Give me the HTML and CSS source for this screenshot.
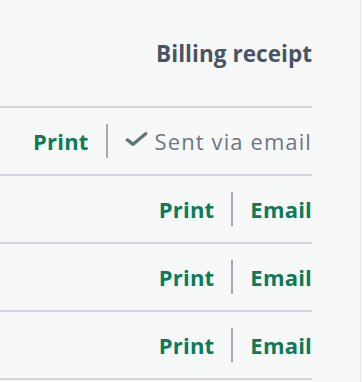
FILE: index.html
```html
<!DOCTYPE html>
<html>
<head>
<meta charset="utf-8">
<link rel="stylesheet" href="styles.css">
</head>
<body>
<div class="page">
  <div class="table">
    <div class="head">Billing receipt</div>
    <div class="row">
      <a class="link">Print</a><span class="sep"></span>
      <span class="sent"><svg class="check" viewBox="0 0 24 16" width="23" height="16"><path d="M2.5 9 L8.5 13.5 L21.5 2.5" fill="none" stroke="#5f7676" stroke-width="3.6" stroke-linecap="round" stroke-linejoin="round"/></svg>Sent via email</span>
    </div>
    <div class="row"><a class="link">Print</a><span class="sep"></span><a class="link">Email</a></div>
    <div class="row"><a class="link">Print</a><span class="sep"></span><a class="link">Email</a></div>
    <div class="row"><a class="link">Print</a><span class="sep"></span><a class="link">Email</a></div>
  </div>
</div>
</body>
</html>
```
FILE: styles.css
```css
html, body {
  margin: 0;
  padding: 0;
  background: #f7f9f9;
}
body {
  font-family: "Open Sans", "Noto Sans", sans-serif;
}
.page {
  width: 361px;
  height: 382px;
  border-right: 1px solid #e8ebec;
  box-sizing: border-box;
  padding-right: 48px;
  overflow: hidden;
}
.table {
  display: flex;
  flex-direction: column;
}
.head {
  height: 106px;
  border-bottom: 2px solid #d3d6db;
  display: flex;
  align-items: center;
  justify-content: flex-end;
  font-size: 22.5px;
  font-weight: 700;
  color: #4a5466;
  letter-spacing: 0.05px;
}
.row {
  height: 66px;
  border-bottom: 2px solid #d3d6db;
  display: flex;
  align-items: center;
  justify-content: flex-end;
  font-size: 22px;
}
.link {
  color: #0e7a56;
  font-weight: 700;
  letter-spacing: 0.2px;
}
.sep {
  width: 2px;
  height: 34px;
  background: #a3a8b0;
  margin: 0 17px;
}
.sent {
  color: #6e7585;
  display: flex;
  align-items: center;
  font-weight: 400;
  letter-spacing: 1.1px;
}
.check {
  margin-right: 7px;
  margin-top: -5px;
}
```
